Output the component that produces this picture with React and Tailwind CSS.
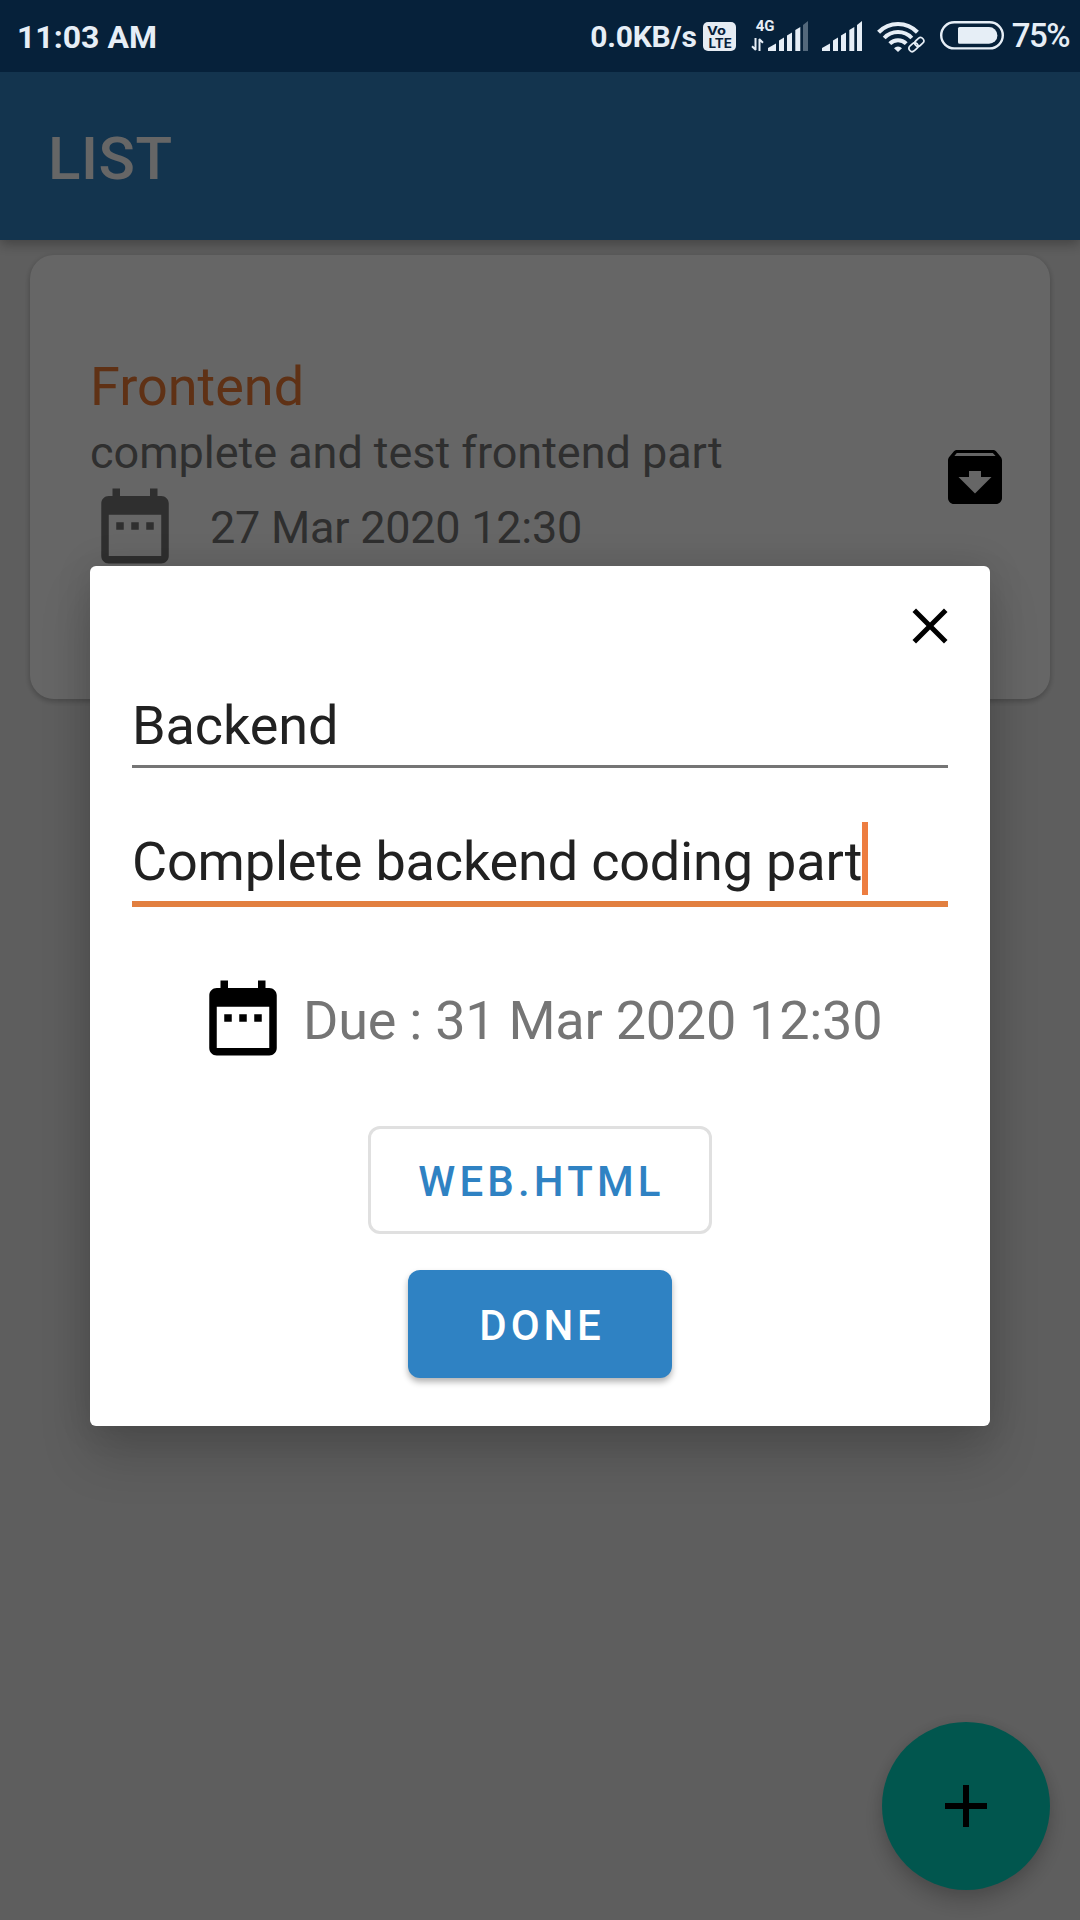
const DateRangeIcon = ({ className }) => (
  <svg viewBox="0 0 24 24" fill="currentColor" className={className}>
    <path d="M9 11H7v2h2v-2zm4 0h-2v2h2v-2zm4 0h-2v2h2v-2zm2-7h-1V2h-2v2H8V2H6v2H5c-1.11 0-1.99.9-1.99 2L3 20c0 1.1.89 2 2 2h14c1.1 0 2-.9 2-2V6c0-1.1-.9-2-2-2zm0 16H5V9h14v11z" />
  </svg>
);

const ArchiveIcon = ({ className }) => (
  <svg viewBox="0 0 24 24" fill="currentColor" className={className}>
    <path d="M20.54 5.23l-1.39-1.68C18.88 3.21 18.47 3 18 3H6c-.47 0-.88.21-1.16.55L3.46 5.23C3.17 5.57 3 6.02 3 6.5V19c0 1.1.9 2 2 2h14c1.1 0 2-.9 2-2V6.5c0-.48-.17-.93-.46-1.27zM12 17.5L6.5 12H10v-2h4v2h3.5L12 17.5zM5.12 5l.81-1h12l.94 1H5.12z" />
  </svg>
);

const CloseIcon = ({ className }) => (
  <svg viewBox="0 0 24 24" fill="currentColor" className={className}>
    <path d="M19 6.41L17.59 5 12 10.59 6.41 5 5 6.41 10.59 12 5 17.59 6.41 19 12 13.41 17.59 19 19 17.59 13.41 12z" />
  </svg>
);

const AddIcon = ({ className }) => (
  <svg viewBox="0 0 24 24" fill="currentColor" className={className}>
    <path d="M19 13h-6v6h-2v-6H5v-2h6V5h2v6h6v2z" />
  </svg>
);

const SignalBars = ({ lastClassName }) => (
  <svg viewBox="0 0 40 30" fill="currentColor" className="h-[30px] w-[40px]">
    <path d="M0 30v-3l8-4.5V30z" />
    <path d="M11 30V19.500l5-3V30z" />
    <path d="M19 30V14.500l5-3V30z" />
    <path d="M27.300 30V9l5-3V30z" />
    <path className={lastClassName} d="M35 30V4l5-4V30z" />
  </svg>
);

const VoLteIcon = () => (
  <svg viewBox="0 0 33 29" className="h-[29px] w-[33px]">
    <rect width="33" height="29" rx="5" fill="#e6ecf3" />
    <g fill="#06213a" fontFamily="Inter, Roboto, sans-serif" fontWeight="700">
      <text x="4" y="12.500" fontSize="12" textLength="19" lengthAdjust="spacingAndGlyphs">Vo</text>
      <text x="5.500" y="25.600" fontSize="12.500" textLength="23.500" lengthAdjust="spacingAndGlyphs">LTE</text>
    </g>
  </svg>
);

const DataArrowsIcon = () => (
  <svg viewBox="0 0 13 13" fill="none" stroke="currentColor" strokeWidth="2" className="h-[13px] w-[13px]">
    <path d="M4.500 0v12M4.900 12L1 8.200" />
    <path d="M8.500 13V1M8.100 1l3.900 3.800" />
  </svg>
);

const WifiLinkIcon = () => (
  <svg viewBox="0 0 48 32" fill="none" stroke="currentColor" className="h-[32px] w-[48px]">
    <path d="M1.600 11.200a27 27 0 0 1 38.800 0" strokeWidth="4.200" />
    <path d="M7.200 17a19 19 0 0 1 27.600 0" strokeWidth="4" />
    <path d="M12.800 22.600a11.600 11.600 0 0 1 16.400 0" strokeWidth="4" />
    <path d="M17 27.200a5.400 5.400 0 0 1 8 0L21 31z" fill="currentColor" stroke="none" />
    <g stroke="#06213a" strokeWidth="5" strokeLinecap="round">
      <path d="M33 29.500L46 17.500" />
    </g>
    <g strokeWidth="1.700" transform="translate(39.400 23.600) rotate(-42)">
      <rect x="-8.800" y="-3.200" width="9.800" height="6.400" rx="3.200" />
      <rect x="-1" y="-3.200" width="9.800" height="6.400" rx="3.200" />
    </g>
  </svg>
);

const BatteryIcon = () => (
  <svg viewBox="0 0 64 29" fill="none" className="h-[29px] w-[64px]">
    <rect x="1.200" y="1.200" width="61.600" height="26.200" rx="13.100" stroke="currentColor" strokeWidth="2.400" />
    <path d="M19.500 6h29.500a8.300 8.300 0 0 1 0 16.800H19.500a1.500 1.500 0 0 1-1.500-1.500V7.500a1.500 1.500 0 0 1 1.500-1.500z" fill="currentColor" />
  </svg>
);

function StatusBar() {
  return (
    <div className="relative z-20 flex h-[72px] items-start justify-between bg-[#06213a] pl-[17px] pr-[11px] pt-[21px] text-[#e6eef6]">
      <span className="pt-px text-[32px] leading-[30px] font-bold">11:03 AM</span>
      <div className="flex items-start">
        <span className="pt-px text-[30px] leading-[30px] font-bold tracking-[-0.2px]">0.0KB/s</span>
        <span className="ml-[6px] mt-px"><VoLteIcon /></span>
        <div className="ml-[15px] flex w-[18px] flex-col">
          <span className="-mt-px ml-[5px] text-[15px] leading-[12px] font-bold">4G</span>
          <span className="mt-[6px]"><DataArrowsIcon /></span>
        </div>
        <div className="-ml-px -mt-px pt-px"><SignalBars lastClassName="opacity-35" /></div>
        <div className="ml-[14px]"><SignalBars /></div>
        <div className="ml-[15px]"><WifiLinkIcon /></div>
        <div className="ml-[15px]"><BatteryIcon /></div>
        <span className="ml-[8px] text-[33px] leading-[30px] font-medium tracking-[-1.5px]">75%</span>
      </div>
    </div>
  );
}

function TaskCard() {
  return (
    <div className="mx-[30px] mt-[15px] flex h-[444px] items-center justify-between rounded-[24px] bg-white pl-[60px] pr-[39px] shadow-[0_2px_5px_1px_rgba(0,0,0,0.2)]">
      <div className="flex flex-col self-start pt-[100px]">
        <h2 className="text-[54px] leading-[63px] text-[#ed7b35]">Frontend</h2>
        <p className="mt-[8px] text-[45px] leading-[53px] tracking-[-0.04px] text-[#757575]">complete and test frontend part</p>
        <div className="mt-[2px] flex items-center gap-[30px] text-[#757575]">
          <DateRangeIcon className="size-[90px]" />
          <span className="pt-[2px] text-[45px] leading-[53px] tracking-[-0.25px]">27 Mar 2020 12:30</span>
        </div>
      </div>
      <ArchiveIcon className="size-[72px] text-black" />
    </div>
  );
}

function TaskDialog() {
  return (
    <div className="flex h-[860px] w-[900px] flex-col rounded-[6px] bg-white px-[42px] shadow-[0_30px_50px_rgba(0,0,0,0.17),0_0_36px_rgba(0,0,0,0.12)]">
      <button className="-mr-[12px] mt-[30px] self-end text-black">
        <CloseIcon className="size-[60px]" />
      </button>
      <div className="mt-[38px] border-b-[3px] border-[#757575] pb-[8px] text-[54px] leading-[63px] tracking-[-0.1px] text-[#212121]">Backend</div>
      <div className="mt-[62px] flex border-b-[6px] border-[#e27f3f] pb-[8px] text-[54px] leading-[63px] tracking-[-0.18px] text-[#212121]">
        <span>Complete backend coding part</span>
        <span className="-mb-[2px] -mt-[8px] h-[73px] w-[6px] bg-[#ed7d40]" />
      </div>
      <div className="ml-[66px] mt-[66px] flex items-center gap-[15px]">
        <DateRangeIcon className="size-[90px] text-black" />
        <span className="pt-[5px] text-[54px] leading-[63px] tracking-[-0.26px] text-[#757575]">Due : 31 Mar 2020 12:30</span>
      </div>
      <button className="mt-[63px] flex h-[108px] w-[344px] items-center justify-center self-center rounded-[12px] border-[3px] border-[#e0e0e0] pl-[3px] pt-[3px] text-[42px] leading-[49px] font-medium tracking-[4.150px] text-[#2f82c3]">
        WEB.HTML
      </button>
      <button className="mt-[36px] flex h-[108px] w-[264px] items-center justify-center self-center rounded-[12px] bg-[#2f82c3] pl-[4px] pt-[3px] text-[42px] leading-[49px] font-medium tracking-[3.850px] text-white shadow-[0_4px_6px_rgba(0,0,0,0.3)]">
        DONE
      </button>
    </div>
  );
}

export default function App() {
  return (
    <div className="relative flex h-[1920px] w-[1080px] flex-col overflow-hidden bg-[#ebebeb] font-['Roboto',sans-serif]">
      <StatusBar />
      <header className="flex h-[168px] shrink-0 items-center bg-[#3182c3] pl-[48px] pt-[5px] shadow-[0_4px_12px_rgba(0,0,0,0.3)]">
        <h1 className="text-[60px] leading-[70px] font-medium tracking-[0.6px] text-white">LIST</h1>
      </header>
      <TaskCard />
      <button className="absolute bottom-[30px] right-[30px] flex size-[168px] items-center justify-center rounded-full bg-[#03d8c3] text-black shadow-[0_12px_20px_rgba(0,0,0,0.18),0_0_14px_rgba(0,0,0,0.08)]">
        <AddIcon className="size-[72px]" />
      </button>
      <div className="absolute inset-0 z-10 flex items-center justify-center bg-black/60 pt-[72px]">
        <TaskDialog />
      </div>
    </div>
  );
}
